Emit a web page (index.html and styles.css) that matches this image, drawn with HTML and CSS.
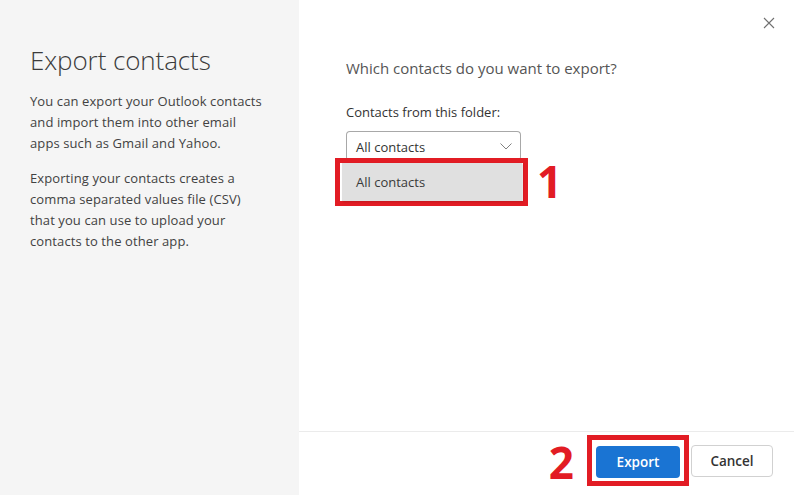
FILE: index.html
```html
<!DOCTYPE html>
<html lang="en">
<head>
<meta charset="utf-8">
<title>Export contacts</title>
<link rel="stylesheet" href="styles.css">
</head>
<body>
<div class="dialog">
  <aside class="side">
    <h1 class="title">Export contacts</h1>
    <p class="desc">You can export your Outlook contacts and import them into other email apps such as Gmail and Yahoo.</p>
    <p class="desc">Exporting your contacts creates a comma separated values file (CSV) that you can use to upload your contacts to the other app.</p>
  </aside>
  <section class="main">
    <button class="close" aria-label="Close">
      <svg width="12" height="12" viewBox="0 0 12 12"><path d="M1 1L11 11M11 1L1 11" stroke="#707070" stroke-width="1.1" fill="none"/></svg>
    </button>
    <div class="content">
      <h2 class="question">Which contacts do you want to export?</h2>
      <div class="label">Contacts from this folder:</div>
      <div class="select-wrap">
        <div class="select">
          <span>All contacts</span>
          <svg class="chev" width="12" height="7" viewBox="0 0 12 7"><path d="M0.5 0.5L6 6L11.5 0.5" stroke="#808080" stroke-width="1" fill="none"/></svg>
        </div>
        <div class="callout">
          <div class="option">All contacts</div>
          <span class="num num1">1</span>
        </div>
      </div>
    </div>
    <footer class="footer">
      <span class="num num2">2</span>
      <span class="mark"><button class="btn primary">Export</button></span>
      <button class="btn secondary">Cancel</button>
    </footer>
  </section>
</div>
</body>
</html>
```
FILE: styles.css
```css
* { box-sizing: border-box; }
html, body { margin: 0; padding: 0; }
body {
  width: 794px;
  height: 495px;
  overflow: hidden;
  font-family: "Segoe UI", "Open Sans", "Noto Sans", sans-serif;
  background: #fff;
}
.dialog {
  display: flex;
  width: 794px;
  height: 495px;
}
.side {
  width: 299px;
  flex: none;
  background: #f5f5f5;
  padding: 42px 31px 0 30px;
}
.title {
  margin: 0 0 13px;
  font-weight: 300;
  font-size: 26px;
  line-height: 36px;
  color: #3b3b3b;
  letter-spacing: -0.1px;
}
.desc {
  margin: 0 0 15px;
  font-size: 13px;
  line-height: 20.8px;
  color: #424242;
  letter-spacing: 0.1px;
}
.main {
  flex: 1;
  position: relative;
  display: flex;
  flex-direction: column;
}
.close {
  position: absolute;
  top: 17px;
  right: 19px;
  width: 12px;
  height: 12px;
  padding: 0;
  border: 0;
  background: none;
  display: flex;
}
.content {
  flex: 1;
  padding: 56px 0 0 47px;
}
.question {
  margin: 0 0 22px;
  font-weight: 400;
  font-size: 15px;
  line-height: 24px;
  color: #555;
}
.label {
  font-size: 13px;
  line-height: 20px;
  color: #333;
  margin-bottom: 9px;
}
.select-wrap {
  position: relative;
  width: 175px;
}
.select {
  height: 30px;
  border: 1px solid #a8a8a8;
  border-bottom-color: #8a8a8a;
  border-radius: 4px;
  display: flex;
  align-items: center;
  justify-content: space-between;
  padding: 2px 8px 0 9px;
  font-size: 13px;
  color: #333;
}
.chev { margin-top: -2px; }
.callout {
  position: absolute;
  left: -11px;
  top: 27px;
  width: 193px;
  height: 48px;
  border: 5px solid #e21c24;
  padding: 0 1px 0 2px;
  display: flex;
  align-items: stretch;
}
.option {
  flex: 1;
  background: #e0e0e0;
  box-shadow: 1px 1px 2px rgba(0,0,0,0.15);
  font-size: 13px;
  color: #3a3a3a;
  display: flex;
  align-items: center;
  padding: 0 0 0 14px;
}
.num {
  font-family: "Open Sans", "Liberation Sans", sans-serif;
  font-weight: 700;
  font-size: 44px;
  line-height: 1;
  color: #e21c24;
}
.num1 {
  position: absolute;
  left: 197px;
  top: -4px;
}
.footer {
  flex: none;
  height: 64px;
  border-top: 1px solid #ebebeb;
  display: flex;
  align-items: center;
  justify-content: flex-end;
  padding: 0 21px 6px 0;
}
.num2 { margin-right: 13px; margin-top: 2px; }
.mark {
  display: flex;
  border: 5px solid #e21c24;
  padding: 6px 4px 3px 4px;
  margin-right: 2px;
}
.btn {
  height: 32px;
  border-radius: 4px;
  font-family: "Segoe UI", "Open Sans", "Noto Sans", sans-serif;
  font-size: 13.5px;
  font-weight: 600;
  padding: 0;
  cursor: pointer;
}
.primary {
  width: 84px;
  background: #1a74d3;
  color: #fff;
  border: 0;
}
.secondary {
  width: 82px;
  background: #fff;
  color: #333;
  border: 1px solid #d1d1d1;
}
```
